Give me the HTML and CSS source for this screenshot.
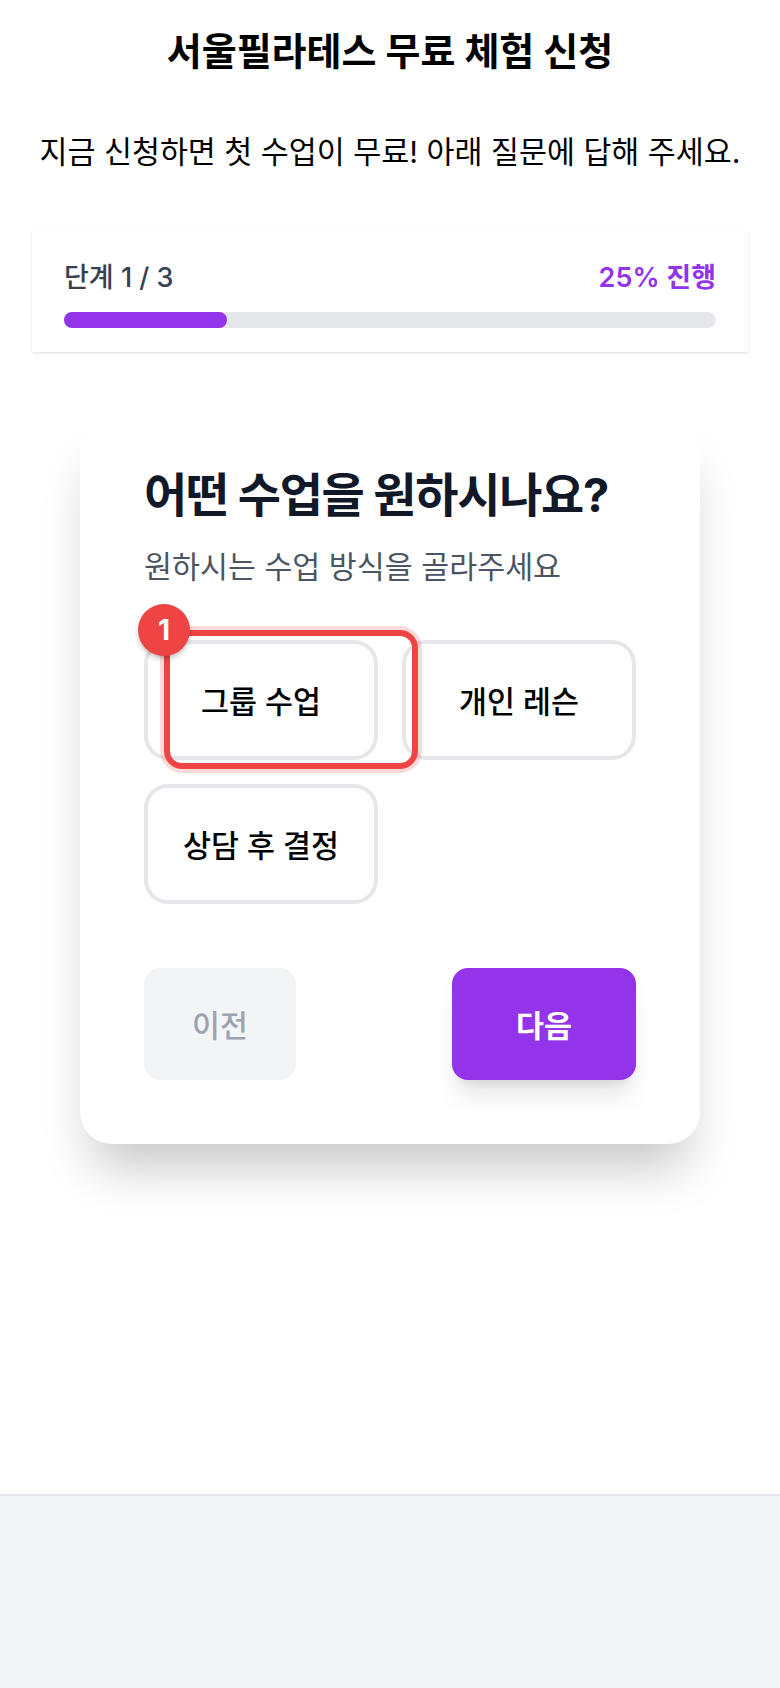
FILE: index.html
```html
<!DOCTYPE html>
<html lang="ko">
<head>
    <meta charset="UTF-8">
    <meta name="viewport" content="width=device-width, initial-scale=1.0">
    <title>서울필라테스 무료 체험 신청</title>
    <link rel="stylesheet" href="styles.css">
</head>
<body>
    <main class="page">
        <h1 class="page-title">서울필라테스 무료 체험 신청</h1>
        <p class="page-lead">지금 신청하면 첫 수업이 무료! 아래 질문에 답해 주세요.</p>

        <section class="progress">
            <div class="progress-labels">
                <span class="progress-step">단계 1 / 3</span>
                <span class="progress-percent">25% 진행</span>
            </div>
            <div class="progress-track">
                <div class="progress-fill"></div>
            </div>
        </section>

        <section class="quiz">
            <h2 class="quiz-title">어떤 수업을 원하시나요?</h2>
            <p class="quiz-lead">원하시는 수업 방식을 골라주세요</p>

            <div class="options">
                <button class="option" type="button">그룹 수업</button>
                <button class="option" type="button">개인 레슨</button>
                <button class="option" type="button">상담 후 결정</button>
                <div class="highlight"><span class="badge">1</span></div>
            </div>

            <div class="actions">
                <button class="btn btn-prev" type="button">이전</button>
                <button class="btn btn-next" type="button">다음</button>
            </div>
        </section>
    </main>
    <footer class="footer"></footer>
</body>
</html>
```

FILE: styles.css
```css
*{
    box-sizing: border-box;
}

body{
    margin: 0;
    width: 780px;
    height: 1688px;
    display: flex;
    flex-direction: column;
    background-color: #fff;
    font-family: Inter, "Noto Sans CJK KR", sans-serif;
    color: #000;
}

.page{
    flex: 1;
    padding: 27px 32px 0;
}

.page-title{
    margin: 0;
    font-size: 38px;
    line-height: 48px;
    font-weight: 700;
    text-align: center;
}

.page-lead{
    margin: 53px 0 0;
    font-size: 30.4px;
    line-height: 48px;
    text-align: center;
    white-space: nowrap;
}

.progress{
    margin-top: 55px;
    padding: 24px 32px;
    height: 121px;
    background-color: #fff;
    box-shadow: 0 1px 3px rgba(0, 0, 0, 0.1), 0 1px 2px -1px rgba(0, 0, 0, 0.1);
}

.progress-labels{
    display: flex;
    justify-content: space-between;
    align-items: center;
    height: 40px;
    font-size: 27px;
    font-weight: 500;
}

.progress-step{
    color: #374151;
}

.progress-percent{
    color: #9333ea;
    font-weight: 600;
}

.progress-track{
    margin-top: 17px;
    height: 16px;
    border-radius: 8px;
    background-color: #e5e7eb;
}

.progress-fill{
    width: 25%;
    height: 100%;
    border-radius: 8px;
    background-color: #9333ea;
}

.quiz{
    margin: 69px 48px 0;
    padding: 48px 64px 64px;
    background-color: #fff;
    border-radius: 32px;
    box-shadow: 0 35px 50px -12px rgba(0, 0, 0, 0.22);
}

.quiz-title{
    margin: 0;
    font-size: 47px;
    line-height: 52px;
    font-weight: 700;
    letter-spacing: -1.3px;
    color: #111827;
}

.quiz-lead{
    margin: 22px 0 0;
    font-size: 30.4px;
    line-height: 48px;
    color: #4b5563;
}

.options{
    position: relative;
    margin-top: 49px;
    display: grid;
    grid-template-columns: 234px 234px;
    justify-content: space-between;
    gap: 24px;
}

.option{
    height: 120px;
    padding: 0;
    background-color: #fff;
    border: 4px solid #e5e7eb;
    border-radius: 24px;
    font-family: inherit;
    font-size: 30.4px;
    font-weight: 500;
    color: #000;
}

.highlight{
    position: absolute;
    top: -10px;
    left: 20px;
    width: 254px;
    height: 139px;
    border: 6px solid #ef4444;
    border-radius: 18px;
    box-shadow: 0 0 0 4px rgba(239, 68, 68, 0.2);
}

.badge{
    position: absolute;
    top: -32px;
    left: -32px;
    width: 52px;
    height: 52px;
    display: flex;
    justify-content: center;
    align-items: center;
    border-radius: 50%;
    background-color: #ef4444;
    box-shadow: 0 4px 6px -1px rgba(0, 0, 0, 0.2), 0 2px 4px -2px rgba(0, 0, 0, 0.2);
    color: #fff;
    font-size: 28px;
    font-weight: 700;
}

.actions{
    margin-top: 64px;
    display: flex;
    justify-content: space-between;
}

.btn{
    height: 112px;
    border: none;
    border-radius: 16px;
    font-family: inherit;
    font-size: 30.4px;
    font-weight: 500;
}

.btn-prev{
    width: 152px;
    background-color: #f3f4f6;
    color: #9ca3af;
}

.btn-next{
    width: 184px;
    background-color: #9333ea;
    color: #fff;
    font-weight: 600;
    box-shadow: 0 20px 25px -5px rgba(0, 0, 0, 0.1), 0 8px 10px -6px rgba(0, 0, 0, 0.1);
}

.footer{
    height: 194px;
    background-color: #f3f4f6;
    border-top: 2px solid #e5e7eb;
}
```
